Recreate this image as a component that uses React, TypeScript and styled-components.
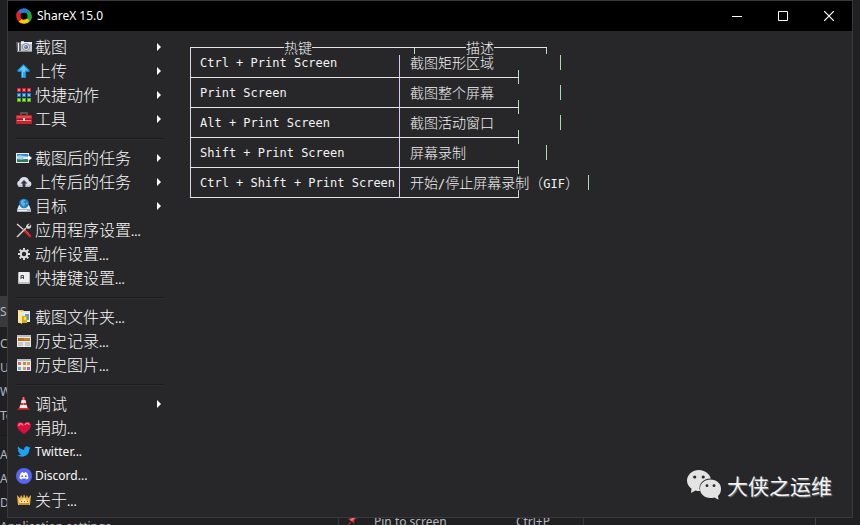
import React from "react";
import styled, { createGlobalStyle } from "styled-components";

const cjk = `"Noto Sans CJK SC", sans-serif`;
const ui = `"Noto Sans", "Noto Sans CJK SC", sans-serif`;
const mono = `"DejaVu Sans Mono", "Noto Sans CJK SC", monospace`;
const line = "#e4e4e4";

const GlobalStyle = createGlobalStyle`
  * { box-sizing: border-box; }
  body { margin: 0; background: #202022; color: #f0f0f0; font-family: ${ui}; }
`;

const Desktop = styled.div`
  position: relative;
  height: 100vh;
  min-height: 525px;
  overflow: hidden;
  padding: 0 7px 7px;
  background: #202022;
`;

const BackLayer = styled.div`
  position: absolute;
  inset: 0 0 -14px;
  display: flex;
  align-items: flex-end;
  font-size: 12px;
  line-height: 24px;
  color: #b4b8be;
  white-space: nowrap;
`;

const BackMenu = styled.div`
  width: 338px;
`;

const BackItem = styled.div`
  width: 8px;
  overflow: hidden;
`;

const BackTab = styled(BackItem)`
  line-height: 31px;
  margin-bottom: 5px;
  background: #3a3a3d;
`;

const BackRule = styled.div`
  height: 1px;
  margin: 7px 0;
  background: #171719;
`;

const BackPopup = styled.div`
  display: flex;
  width: 246px;
  padding: 0 33px 4px 7px;
  border: 1px solid #38383a;
  gap: 16px;

  svg { margin-top: 4px; }
  span:last-child { margin-left: auto; }
`;

const BackEdge = styled.div`
  flex: 1;
  height: 24px;
  margin-right: 44px;
  border-right: 1px solid #454548;
`;

const Window = styled.main`
  position: relative;
  display: flex;
  flex-direction: column;
  height: 100%;
  border: 1px solid #39393b;
  background: #272729;
`;

const TitleBar = styled.header`
  display: flex;
  align-items: center;
  flex: none;
  height: 30px;
  padding-left: 8px;
  background: #000;
`;

const Title = styled.h1`
  flex: 1;
  margin: 0;
  padding-left: 5px;
  font-size: 12px;
  line-height: 16px;
  font-weight: 400;
  color: #fff;
`;

const CaptionButton = styled.button`
  display: grid;
  place-items: center;
  width: 46px;
  height: 30px;
  padding: 0;
  border: 0;
  background: none;
  color: #fff;
`;

const Body = styled.div`
  display: flex;
  flex: 1;
  min-height: 0;
`;

const Menu = styled.nav`
  flex: none;
  width: 156px;
  padding: 4px 0 4px 8px;
`;

const Separator = styled.hr`
  height: 2px;
  margin: 7px 0 6px;
  border: 0;
  border-top: 1px solid #1b1b1d;
  border-bottom: 1px solid #2e2e30;
`;

const MenuItem = styled.button`
  display: flex;
  align-items: center;
  width: 100%;
  height: 24px;
  padding: 0 3px 0 0;
  gap: 3px;
  border: 0;
  background: none;
  color: #f8f8f8;
  font-family: ${ui};
  font-size: 12px;
  line-height: 24px;
  text-align: left;
  white-space: nowrap;

  > svg { flex: none; }
`;

const Label = styled.span`
  flex: 1;
`;

const Han = styled.span`
  font-family: ${cjk};
  font-size: 16px;
  font-weight: 300;
`;

const Content = styled.section`
  display: flex;
  flex: 1;
  flex-direction: column;
  justify-content: space-between;
  align-items: flex-start;
  padding: 9px 20px 16px 26px;
`;

const Table = styled.table`
  display: block;
  font-family: ${mono};
  font-size: 12px;
  line-height: 15px;
  color: #f2f2f2;
  white-space: pre;
`;

const Head = styled.thead`
  display: block;

  tr {
    display: flex;
    width: 357px;
    height: 15px;
    background:
      linear-gradient(#d8d4ee, #d8d4ee) 0 7px / 1px 8px no-repeat,
      linear-gradient(#bcdcc0, #bcdcc0) 224px 7px / 1px 7px no-repeat,
      linear-gradient(#bcdcc0, #bcdcc0) 100% 7px / 1px 7px no-repeat;
  }
`;

const HeadCell = styled.th<{ $width: number; $lead: number }>`
  display: flex;
  align-items: center;
  width: ${(p) => p.$width}px;
  padding: 0;
  font-family: ${cjk};
  font-size: 14px;
  font-weight: 300;

  &::before, &::after {
    content: "";
    height: 1px;
    background: ${line};
  }

  &::before { flex: 0 0 ${(p) => p.$lead}px; }
  &::after { flex: 1; }
`;

const Rows = styled.tbody`
  display: block;
  background:
    linear-gradient(#d8d4ee, #d8d4ee) 0 0 / 1px 143px no-repeat,
    linear-gradient(#d8c8f0, #d8c8f0) 209px 0 / 1px 143px no-repeat;
`;

const Row = styled.tr`
  display: grid;
  grid-template-columns: 220px max-content;
  grid-template-rows: 15px 15px;

  &::after {
    content: "";
    grid-column: 1 / 3;
    width: 329px;
    background:
      linear-gradient(${line}, ${line}) 0 7px / 100% 1px no-repeat,
      linear-gradient(#bcdcc0, #bcdcc0) 100% 0 / 1px 14px no-repeat;
  }

  &:last-child::after { height: 8px; }
`;

const KeyCell = styled.td`
  padding: 2px 0 0 10px;
  line-height: 13px;
`;

const TextCell = styled.td<{ $width: number }>`
  width: ${(p) => p.$width}px;
  padding: 0;
  border-right: 1px solid #a8dcb0;
  font-family: ${cjk};
  font-size: 14px;
  font-weight: 300;

  small { font-family: ${mono}; font-size: 12px; font-weight: 400; }
`;

const Watermark = styled.div`
  display: flex;
  align-items: center;
  align-self: flex-end;
  gap: 6px;
  font-family: ${cjk};
  font-size: 21px;
  line-height: 32px;
  color: #f2f2f2;
  text-shadow: 1px 1px 1px #777;
`;

const Icon = ({ children }: { children: React.ReactNode }) => (
  <svg width="16" height="16" viewBox="0 0 16 16" aria-hidden="true">
    {children}
  </svg>
);

const Logo = () => (
  <Icon>
    <path d="M3 2.4C6-.4 11-.4 14 3.4c1.300 2 .8 4.600-.8 5.600C13 5.500 9 3.500 5.500 5.500 3.500 5.500 2.400 4 3 2.400Z" fill="#237be0" />
    <path d="M13.800 3.200C17 7 16.500 12 12.800 14.200c-2.300 1.200-4.600.6-5.300-.8C11 12.500 12.600 9 10.800 5.600c0-2 1.500-3 3-2.400Z" fill="#19a83c" />
    <path d="M13 13.800C9.500 17 4 16.300 2 12.600 1 10.500 1.500 8 3 7.200 3.500 11 7 12.800 10.500 10.800c2 0 3.200 1.500 2.500 3Z" fill="#ffc40c" />
    <path d="M2.200 12.900C-.8 9-.6 4 3.200 1.900 5.500.8 7.800 1.400 8.600 2.800 5 3.500 3.500 7 5.300 10.300c0 2-1.500 3.100-3.100 2.600Z" fill="#e51e2b" />
    <path d="M3 2.300C5 .5 8 0 10 .7c2 .8 2 2.300 1 3.300C8 3 5.500 3.500 4.500 5.600 3.200 5 2.600 3.600 3 2.300Z" fill="#237be0" />
    <circle cx="8" cy="8" r="2.800" fill="#000" />
  </Icon>
);

const Camera = () => (
  <Icon>
    <path d="M1 3h4V2h3v1h8v10H1z" fill="#c5c6cc" />
    <path d="M5 3h11v2H5z" fill="#eeeeef" />
    <path d="M0 3h5v10H1z" fill="#65656a" />
    <path d="M2 4h1v8H2z" fill="#efefef" />
    <circle cx="10" cy="8" r="3.500" fill="#eee" stroke="#858791" />
    <circle cx="10" cy="8" r="2" fill="#4b659b" />
    <circle cx="9.500" cy="7.500" r="1" fill="#a8c8f0" />
    <path d="M1 12h15v1H1z" fill="#8c8c92" />
  </Icon>
);

const UpArrow = () => (
  <Icon>
    <path d="M7.500 1 14 7.500l-1 1.500h-3v6H5V9H2L1 7.500z" fill="#168bd4" />
    <path d="M7.500 2.500 12.500 7.500H9v6.500H6V7.500H2.500z" fill="#66c6f7" />
    <path d="M7 9h2v5H7z" fill="#2fa5ea" />
  </Icon>
);

const Blocks = () => (
  <Icon>
    {[["#d61d34", "#ff8290", 1], ["#1680c6", "#76c8fc", 6], ["#50a41e", "#a4ed52", 11]].map(([base, hi, y]) =>
      [1, 6, 11].map((x) => (
        <React.Fragment key={`${x}-${y}`}>
          <rect x={x} y={y as number} width="4" height="4" fill={base as string} />
          <rect x={x + 1} y={(y as number) + 1} width="2" height="2" fill={hi as string} />
        </React.Fragment>
      ))
    )}
  </Icon>
);

const Toolbox = () => (
  <Icon>
    <path d="M5 5V2h6v3" fill="none" stroke="#55555b" strokeWidth="2" />
    <rect y="4" width="16" height="9" rx="1" fill="#cb222d" />
    <path d="M1 5h14v2H1z" fill="#e2484f" />
    <path d="M0 8h16v1H0z" fill="#981d24" />
    <path d="M1 9h14v1H1z" fill="#ef8185" />
    <path d="M7 7h2v3H7z" fill="#f3e7df" />
  </Icon>
);

const ImageOut = () => (
  <Icon>
    <path d="M0 3h13v10H0z" fill="#e8eef3" />
    <path d="M1 4h11v8H1z" fill="#3489cf" />
    <path d="M1 6c4-2 7 1 11 0v3L1 10z" fill="#9ed4ef" />
    <path d="M1 9l5 1 6-2v4H1z" fill="#337b57" />
    <path d="M7 7h5V5l4 3-4 3V9H7z" fill="#fff" stroke="#79949f" strokeWidth=".4" />
  </Icon>
);

const CloudUp = () => (
  <Icon>
    <path d="M3.500 13a3.500 3.500 0 0 1-.2-6.500C4 4.500 5.700 3 8 3c3 0 4.800 2 5 4.100A3 3 0 0 1 13 13Z" fill="#dddded" />
    <path d="m8 6 3.500 3.500H9.500V13h-3V9.500h-2z" fill="#38383f" />
    <path d="M2 12h4M10 12h4" stroke="#a7a7bd" />
  </Icon>
);

const Target = () => (
  <Icon>
    <path d="M3 7h10l2 5v2H1v-2z" fill="#e8edf3" />
    <path d="M1 11h14v3H1z" fill="#aab7c4" />
    <path d="M2 12h9v1H2z" fill="#f4f4f4" />
    <circle cx="8" cy="5.500" r="4.800" fill="#237fc4" />
    <path d="M4.500 4c1-3 5-2.500 5-1.500L7 4l2.500 1.500L8 9 5.500 6.500zM11 3.500l1 3-2-1z" fill="#62b2e6" />
  </Icon>
);

const Tools = () => (
  <Icon>
    <path d="m1 2 7 6" stroke="#dedede" strokeWidth="1.200" />
    <path d="m8 8 6 6" stroke="#d81f2b" strokeWidth="2.500" strokeLinecap="round" />
    <path d="m1 15 9-9" stroke="#d7d7d7" strokeWidth="1.500" />
    <path d="M14 1.500 12 3.500l1 1 2-2c1 3-1 5-4 4-2-1-1-5 3-5Z" fill="#d7d7d7" />
    <path d="m9 8 4 4" stroke="#f36870" strokeWidth=".7" />
  </Icon>
);

const Gear = () => (
  <Icon>
    <g stroke="#dcdcdc" strokeWidth="2">
      <path d="M8 2v3M8 11v3M2 8h3M11 8h3M3.700 3.700l2 2M10.300 10.300l2 2M3.700 12.300l2-2M10.300 5.700l2-2" />
      <circle cx="8" cy="8" r="3.200" fill="none" />
    </g>
  </Icon>
);

const KeyCap = () => (
  <Icon>
    <rect x="2" y="2" width="12" height="12" rx="1" fill="#bdbdbd" />
    <path d="M3 2h10v10H3z" fill="#ededed" />
    <path d="M5 9V5.500h2.500V9M5 7.500h2" fill="none" stroke="#444" />
  </Icon>
);

const Folder = () => (
  <Icon>
    <path d="M2 1h5l1 1v12H2z" fill="#e9bd5b" />
    <path d="M6 2h8v9H6z" fill="#d9e7f5" />
    <path d="M8 4h6v9H8z" fill="#eef3f8" />
    <path d="M9 5h4v6H9z" fill="#5f9cd4" />
    <path d="M6 7h5v7H6z" fill="#d9aa12" />
    <path d="m2 1 4 2v12l-4-2z" fill="#ffe7a0" />
    <path d="M8 8h2v3H8z" fill="#ffe23d" />
  </Icon>
);

const History = () => (
  <Icon>
    <path d="M1 2h14v12H1z" fill="#e9e9e9" />
    <path d="M1 2h14v2H1z" fill="#b9bcc0" />
    <path d="M2 5h12v3H2z" fill="#b96f1c" />
    <path d="M8 5h6v2H8z" fill="#cc8430" />
    <path d="M2 10h5M9 10h5M2 12h5M9 12h5" stroke="#a6a6a6" />
  </Icon>
);

const Gallery = () => (
  <Icon>
    <path d="M1 2h14v12H1z" fill="#ececec" />
    <path d="M1 2h14v2H1z" fill="#b9bcc0" />
    <path d="M2 5h3v3H2z" fill="#cf6975" />
    <path d="M7 5h3v3H7z" fill="#bd8b47" />
    <path d="M11 5h3v3h-3z" fill="#d99440" />
    <path d="M2 10h3v3H2z" fill="#62bdc0" />
    <path d="M7 10h3v3H7z" fill="#c0a05d" />
    <path d="M11 10h3v3h-3z" fill="#bd58bf" />
  </Icon>
);

const Cone = () => (
  <Icon>
    <path d="M2 12h11l1 2H1z" fill="#a92026" />
    <path d="M6.500 1h2L12 13H3z" fill="#dc3038" />
    <path d="m5.600 4-.8 3h5.400l-.8-3zM4.200 9l-.7 3h8l-.8-3z" fill="#e9e9e9" />
    <path d="M7 1h1v11H7z" fill="#fff" opacity=".35" />
  </Icon>
);

const Heart = () => (
  <Icon>
    <path d="M8 14C5 12 1 8.500 1 5.200 1 1.500 6 .7 8 4c2-3.300 7-2.500 7 1.200C15 8.500 11 12 8 14Z" fill="#d80f38" />
    <path d="M3 6c-.5-3 3-3 4-.5M9 5c1-2.500 4-2 4 0" fill="none" stroke="#ff7690" strokeWidth="1.500" />
  </Icon>
);

const Bird = () => (
  <Icon>
    <path d="M14.600 3.700a5 5 0 0 1-1.400.4A2.500 2.500 0 0 0 14.300 2.700a5 5 0 0 1-1.600.6A2.600 2.600 0 0 0 8.200 5.700 7.400 7.400 0 0 1 2.200 2.600a2.600 2.600 0 0 0 .8 3.600 2.500 2.500 0 0 1-1.200-.4 2.600 2.600 0 0 0 2.100 2.600 2.600 2.600 0 0 1-1.200 0 2.600 2.600 0 0 0 2.500 1.800A5.200 5.200 0 0 1 1.300 11.300C6.800 14.800 13.600 11.400 13.300 5.100a5 5 0 0 0 1.300-1.400Z" fill="#1da1f2" />
  </Icon>
);

const Discord = () => (
  <Icon>
    <circle cx="8" cy="8" r="8" fill="#5865f2" />
    <path d="m5.600 4.400 1.100-.3.400.6h1.800l.4-.6 1.100.3c1.400 1 2.200 3.500 2 6l-1.900 1.100-.7-1H6.200l-.7 1-1.900-1.100c-.2-2.500.6-5 2-6Z" fill="#fff" />
    <circle cx="6.200" cy="8.200" r="1" fill="#5865f2" />
    <circle cx="9.800" cy="8.200" r="1" fill="#5865f2" />
  </Icon>
);

const Crown = () => (
  <Icon>
    <path d="m1 3 3 3 1-3 2 3 1-4 1.500 4L11 3l1 3 3-3-1 10H2z" fill="#e9b84d" />
    <path d="m3 7 2 2 3-3 3 3 2-2-.5 4h-9z" fill="#ffe594" />
    <path d="M3 12h10" stroke="#a96e1d" />
    <path d="M5 9h1v1H5zM8 9h1v1H8zM11 9h1v1h-1z" fill="#c44337" />
  </Icon>
);

const Pin = () => (
  <svg width="12" height="12" viewBox="0 0 12 12" aria-hidden="true">
    <path d="m7 0 5 4-3 1-1 3 1 2-7-5 3-1zM4 8l1 1-4 3z" fill="#cb3335" />
    <path d="m7 3 2 1-3 3-2-1z" fill="#e87775" />
  </svg>
);

const Chevron = () => (
  <svg width="4" height="8" viewBox="0 0 4 8" aria-hidden="true">
    <path d="M0 0v8l4-4z" fill="#fff" />
  </svg>
);

const WeChat = () => (
  <svg width="34" height="30" viewBox="0 0 34 30" aria-hidden="true">
    <path d="M12 0C5.400 0 0 4.700 0 10.500c0 3.300 1.700 6.200 4.500 8.200L4 23l4.500-2.500c1.400.4 3 .6 4.500.5C11 14 16 9 23.800 8.600 22.600 3.500 17.500 0 12 0Z" fill="#e3e3e3" />
    <path d="M23.500 9.500C17.500 9.500 13 13.500 13 18.700S17.500 28 23.500 28c1.400 0 2.700-.2 4-.6L31.500 29.700 31 26c1.900-1.700 3-4.300 3-7.300 0-5.200-4.500-9.200-10.500-9.200Z" fill="#e3e3e3" />
    <g fill="#29292b">
      <circle cx="7.700" cy="7" r="1.600" />
      <circle cx="16.200" cy="7" r="1.600" />
      <circle cx="20" cy="15.700" r="1.400" />
      <circle cx="27" cy="15.700" r="1.400" />
    </g>
  </svg>
);

type Item = { icon: React.FC; han?: string; latin?: string; sub?: boolean };

const groups: Item[][] = [
  [
    { icon: Camera, han: "截图", sub: true },
    { icon: UpArrow, han: "上传", sub: true },
    { icon: Blocks, han: "快捷动作", sub: true },
    { icon: Toolbox, han: "工具", sub: true },
  ],
  [
    { icon: ImageOut, han: "截图后的任务", sub: true },
    { icon: CloudUp, han: "上传后的任务", sub: true },
    { icon: Target, han: "目标", sub: true },
    { icon: Tools, han: "应用程序设置", latin: "..." },
    { icon: Gear, han: "动作设置", latin: "..." },
    { icon: KeyCap, han: "快捷键设置", latin: "..." },
  ],
  [
    { icon: Folder, han: "截图文件夹", latin: "..." },
    { icon: History, han: "历史记录", latin: "..." },
    { icon: Gallery, han: "历史图片", latin: "..." },
  ],
  [
    { icon: Cone, han: "调试", sub: true },
    { icon: Heart, han: "捐助", latin: "..." },
    { icon: Bird, latin: "Twitter..." },
    { icon: Discord, latin: "Discord..." },
    { icon: Crown, han: "关于", latin: "..." },
  ],
];

const hotkeys: { keys: string; text: React.ReactNode; width: number }[] = [
  { keys: "Ctrl + Print Screen", text: "截图矩形区域", width: 151 },
  { keys: "Print Screen", text: "截图整个屏幕", width: 151 },
  { keys: "Alt + Print Screen", text: "截图活动窗口", width: 151 },
  { keys: "Shift + Print Screen", text: "屏幕录制", width: 137 },
  {
    keys: "Ctrl + Shift + Print Screen",
    text: <>开始<small>/</small>停止屏幕录制（<small>GIF</small>）</>,
    width: 179,
  },
];

export default function App() {
  return (
    <Desktop>
      <GlobalStyle />
      <BackLayer aria-hidden="true">
        <BackMenu>
          <BackTab>Sh</BackTab>
          <BackItem>Ca</BackItem>
          <BackItem>Up</BackItem>
          <BackItem>Wo</BackItem>
          <BackItem>To</BackItem>
          <BackRule />
          <BackItem>Af</BackItem>
          <BackItem>Af</BackItem>
          <BackItem>De</BackItem>
          <div>Application settings...</div>
        </BackMenu>
        <BackPopup>
          <Pin />
          <span>Pin to screen</span>
          <span>Ctrl+P</span>
        </BackPopup>
        <BackEdge />
      </BackLayer>
      <Window>
        <TitleBar>
          <Logo />
          <Title>ShareX 15.0</Title>
          <CaptionButton aria-label="Minimize">
            <svg width="10" height="10"><path d="M0 5.500h10" stroke="currentColor" /></svg>
          </CaptionButton>
          <CaptionButton aria-label="Maximize">
            <svg width="10" height="10"><path d="M.5.500h9v9h-9z" fill="none" stroke="currentColor" /></svg>
          </CaptionButton>
          <CaptionButton aria-label="Close">
            <svg width="10" height="10"><path d="m0 0 10 10M10 0 0 10" stroke="currentColor" strokeWidth="1.200" /></svg>
          </CaptionButton>
        </TitleBar>
        <Body>
          <Menu>
            {groups.map((group, i) => (
              <React.Fragment key={i}>
                {i > 0 && <Separator />}
                {group.map(({ icon: Glyph, han, latin, sub }) => (
                  <MenuItem key={han ?? latin} type="button">
                    <Glyph />
                    <Label>
                      {han && <Han>{han}</Han>}
                      {latin}
                    </Label>
                    {sub && <Chevron />}
                  </MenuItem>
                ))}
              </React.Fragment>
            ))}
          </Menu>
          <Content>
            <Table>
              <Head>
                <tr>
                  <HeadCell $width={225} $lead={94}>热键</HeadCell>
                  <HeadCell $width={132} $lead={51}>描述</HeadCell>
                </tr>
              </Head>
              <Rows>
                {hotkeys.map((h) => (
                  <Row key={h.keys}>
                    <KeyCell>{h.keys}</KeyCell>
                    <TextCell $width={h.width}>{h.text}</TextCell>
                  </Row>
                ))}
              </Rows>
            </Table>
            <Watermark>
              <WeChat />
              大侠之运维
            </Watermark>
          </Content>
        </Body>
      </Window>
    </Desktop>
  );
}
